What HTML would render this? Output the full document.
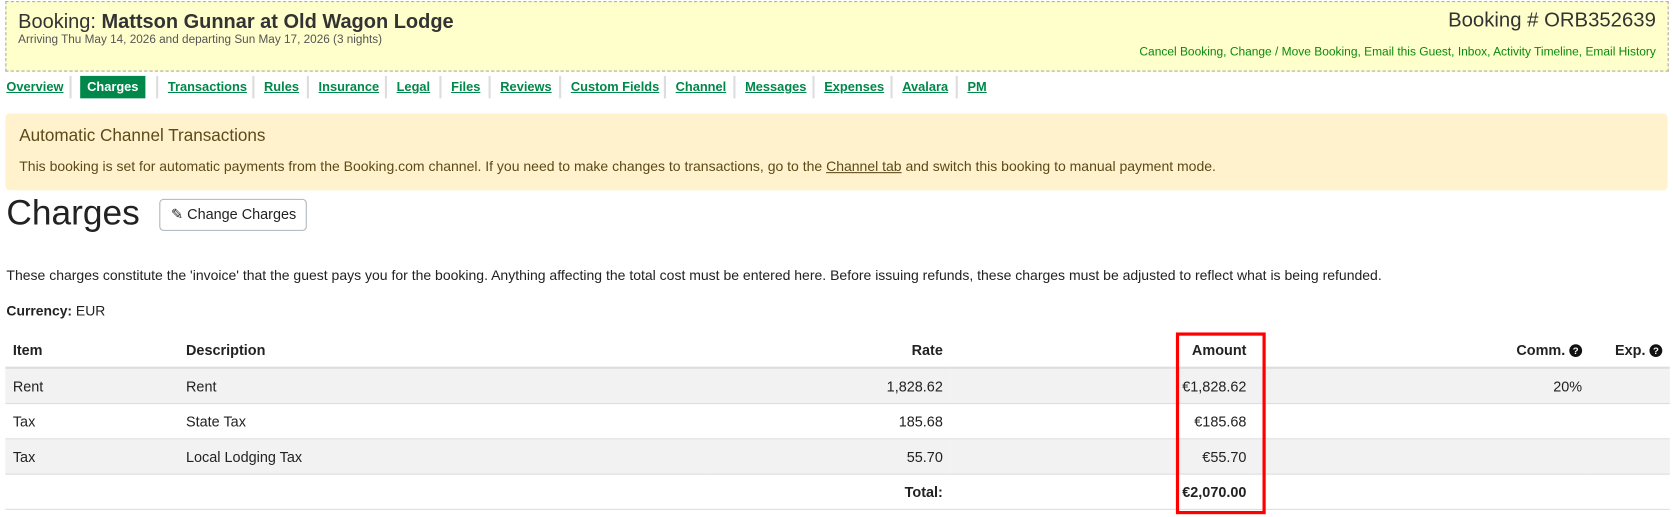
<!DOCTYPE html>
<html><head><meta charset="utf-8"><style>
body{margin:0;width:1673px;height:517px;background:#fff;font-family:"Liberation Sans",Arial,sans-serif;color:#222;position:relative;overflow:hidden}
#w{position:absolute;left:0;top:0;width:1565px;height:484px;transform:scale(1.069);transform-origin:0 0}
.a{position:absolute;white-space:nowrap}
.hdr{position:absolute;left:5px;top:1px;width:1554px;height:64px;background:#ffffcc;border:1px dashed #aaa}
.nav a{position:absolute;top:74px;font-size:12px;font-weight:bold;color:#00874a;text-decoration:underline}
.sep{position:absolute;top:71px;width:2px;height:21px;background:#ddd}
.g{color:#0a8a0a}
table{position:absolute;left:5px;top:312px;width:1557px;border-collapse:collapse;font-size:13.5px}
td,th{height:32px;padding:0 7px;border-bottom:1px solid #ddd}
th{text-align:left;font-weight:bold;height:31px;border-bottom:2px solid #ddd}
tr.s td{background:#f2f2f2}
.r{text-align:right}
.q{display:inline-block;width:12px;height:12px;border-radius:50%;background:#111;color:#fff;font-size:9px;text-align:center;line-height:12px;vertical-align:1px}
</style></head><body><div id="w">
<div class="hdr"></div>
<div class="a" style="left:17px;top:9px;font-size:18.7px;color:#333">Booking: <b>Mattson Gunnar at Old Wagon Lodge</b></div>
<div class="a" style="left:17px;top:31px;font-size:11px;color:#555">Arriving Thu May 14, 2026 and departing Sun May 17, 2026 (3 nights)</div>
<div class="a" style="right:16px;top:9px;font-size:19px;color:#333">Booking # ORB352639</div>
<div class="a g" style="right:16px;top:43px;font-size:11.2px">Cancel Booking, Change / Move Booking, Email this Guest, Inbox, Activity Timeline, Email History</div>
<div class="nav">
<a style="left:6px">Overview</a>
<div class="a" style="left:75px;top:71px;width:61px;height:21px;background:#00874a;color:#fff;font-size:12px;font-weight:bold;text-align:center;line-height:21px">Charges</div>
<a style="left:157px">Transactions</a><a style="left:247px">Rules</a><a style="left:298px">Insurance</a><a style="left:371px">Legal</a><a style="left:422px">Files</a><a style="left:468px">Reviews</a><a style="left:534px">Custom Fields</a><a style="left:632px">Channel</a><a style="left:697px">Messages</a><a style="left:771px">Expenses</a><a style="left:844px">Avalara</a><a style="left:905px">PM</a>
</div>
<div class="sep" style="left:65px"></div><div class="sep" style="left:146px"></div><div class="sep" style="left:236px"></div><div class="sep" style="left:287px"></div><div class="sep" style="left:360px"></div><div class="sep" style="left:411px"></div><div class="sep" style="left:457px"></div><div class="sep" style="left:523px"></div><div class="sep" style="left:621px"></div><div class="sep" style="left:686px"></div><div class="sep" style="left:760px"></div><div class="sep" style="left:833px"></div><div class="sep" style="left:894px"></div>
<div class="a" style="left:5px;top:106px;width:1555px;height:72px;background:#fff2cc;border-radius:4px"></div>
<div class="a" style="left:18px;top:119px;font-size:16px;color:#5c4a1a">Automatic Channel Transactions</div>
<div class="a" style="left:18px;top:148px;font-size:13.1px;color:#5c4a1a">This booking is set for automatic payments from the Booking.com channel. If you need to make changes to transactions, go to the <u>Channel tab</u> and switch this booking to manual payment mode.</div>
<div class="a" style="left:6px;top:180px;font-size:33px;color:#222">Charges</div>
<div class="a" style="left:149px;top:186px;width:136px;height:28px;border:1px solid #adb5bd;border-radius:4px;font-size:13.5px;line-height:28px;color:#222"><span style="margin-left:10px">✎</span> Change Charges</div>
<div class="a" style="left:6px;top:250px;font-size:13.1px">These charges constitute the 'invoice' that the guest pays you for the booking. Anything affecting the total cost must be entered here. Before issuing refunds, these charges must be adjusted to reflect what is being refunded.</div>
<div class="a" style="left:6px;top:283px;font-size:13px"><b>Currency:</b> EUR</div>
<table>
<tr><th style="width:148px">Item</th><th style="width:485px">Description</th><th class="r" style="width:209px">Rate</th><th class="r" style="width:270px">Amount</th><th class="r" style="width:300px">Comm. <span class="q">?</span></th><th class="r">Exp. <span class="q">?</span></th></tr>
<tr class="s"><td>Rent</td><td>Rent</td><td class="r">1,828.62</td><td class="r">€1,828.62</td><td class="r">20%</td><td></td></tr>
<tr><td>Tax</td><td>State Tax</td><td class="r">185.68</td><td class="r">€185.68</td><td></td><td></td></tr>
<tr class="s"><td>Tax</td><td>Local Lodging Tax</td><td class="r">55.70</td><td class="r">€55.70</td><td></td><td></td></tr>
<tr><td></td><td></td><td class="r"><b>Total:</b></td><td class="r"><b>€2,070.00</b></td><td></td><td></td></tr>
</table>
<div class="a" style="left:1100px;top:311px;width:78px;height:164px;border:3px solid red"></div>
</div></body></html>
